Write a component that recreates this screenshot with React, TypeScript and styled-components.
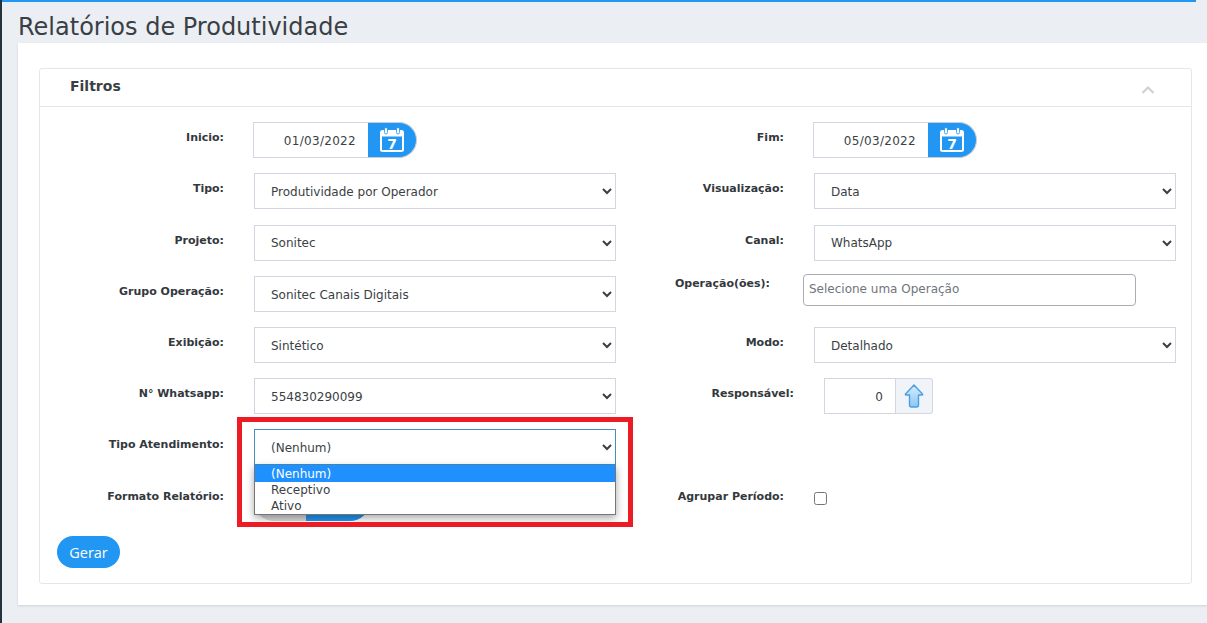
import React from "react";
import styled, { createGlobalStyle } from "styled-components";

const GlobalStyle = createGlobalStyle`
    html, body {
        margin: 0;
        padding: 0;
        background: #ebeef3;
        font-family: "DejaVu Sans", Verdana, sans-serif;
    }
`;

const PageSC = styled.div`
    position: relative;
    width: 1207px;
    height: 623px;
    overflow: hidden;
    box-sizing: border-box;
    border-left: 2px solid #26333d;
`;
const TopLineSC = styled.div`
    height: 2px;
    width: 1194px;
    background: #2196f3;
`;
const TitleSC = styled.h1`
    margin: 0;
    height: 41px;
    padding-left: 16px;
    font-size: 24px;
    font-weight: 400;
    line-height: 50px;
    color: #3a3f45;
    white-space: nowrap;
`;
const PanelSC = styled.div`
    margin-left: 16px;
    padding: 25px 15px 21px 21px;
    background: #fff;
    box-shadow: 0 1px 2px rgba(0, 0, 0, 0.12);
`;
const CardSC = styled.section`
    border: 1px solid #e4e6ea;
    border-radius: 3px;
`;
const CardHeaderSC = styled.header`
    display: flex;
    align-items: center;
    justify-content: space-between;
    box-sizing: border-box;
    height: 38px;
    padding: 0 36px 0 30px;
    border-bottom: 1px solid #e4e6ea;
    font-size: 14px;
    font-weight: 700;
    color: #3a3f45;
`;
const CardTitleSC = styled.span`
    margin-bottom: 4px;
`;
const CollapseSC = styled.svg`
    margin-top: 4px;
`;
const CardBodySC = styled.div`
    display: grid;
    grid-template-columns: 560px 560px;
    row-gap: 15.2px;
    padding: 15.29px 15px 14.6px 16px;
`;
const FieldSC = styled.div<{ $labelWidth?: number; $gap?: number; $raise?: number }>`
    display: grid;
    grid-template-columns: ${(p) => p.$labelWidth ?? 168}px 1fr;
    column-gap: ${(p) => p.$gap ?? 30}px;
    align-items: start;
    margin-top: ${(p) => -(p.$raise ?? 0)}px;
`;
const LabelSC = styled.label<{ $top?: number }>`
    padding-top: ${(p) => p.$top ?? 9}px;
    font-size: 11px;
    line-height: 14px;
    font-weight: 700;
    color: #33383d;
    text-align: right;
    white-space: nowrap;
`;
const SelectSC = styled.select<{ $focused?: boolean }>`
    display: block;
    box-sizing: border-box;
    width: 362px;
    height: 36px;
    padding: 1.6px 0 0 12px;
    background: #fff;
    border: 1px solid ${(p) => (p.$focused ? "#4a8db8" : "#d3d6e0")};
    border-radius: 0;
    outline: none;
    font-family: inherit;
    font-size: 12px;
    color: #3a3f45;
`;
const DateBoxSC = styled.div`
    display: flex;
    width: 164px;
    height: 36px;
    margin-left: -1px;
`;
const DateInputSC = styled.div`
    box-sizing: border-box;
    width: 115px;
    padding-right: 12px;
    border: 1px solid #d3d6e0;
    border-right: none;
    font-size: 12px;
    letter-spacing: 0.3px;
    line-height: 37px;
    color: #3a3f45;
    text-align: right;
`;
const DateButtonSC = styled.button`
    display: flex;
    align-items: center;
    justify-content: center;
    box-sizing: border-box;
    width: 49px;
    padding: 0 1px 0 0;
    background: #2196f3;
    border: 1px solid #c8ccd6;
    border-left: none;
    border-radius: 0 18px 18px 0;
`;
const OperationSC = styled.input`
    box-sizing: border-box;
    width: 333px;
    height: 32px;
    padding: 0 5px 2px;
    border: 1px solid #a9adb3;
    border-radius: 4px;
    outline: none;
    font-family: inherit;
    font-size: 12px;
    &::placeholder {
        color: #6f757b;
        opacity: 1;
    }
`;
const StepperSC = styled.div`
    display: flex;
    width: 109px;
    height: 36px;
`;
const StepperValueSC = styled.div`
    box-sizing: border-box;
    width: 72px;
    padding-right: 12px;
    border: 1px solid #d3d6e0;
    font-size: 12px;
    line-height: 37px;
    color: #3a3f45;
    text-align: right;
`;
const StepperButtonSC = styled.div`
    display: flex;
    align-items: center;
    justify-content: center;
    box-sizing: border-box;
    width: 37px;
    background: #f0f3f8;
    border: 1px solid #d3d6e0;
    border-left: none;
    border-radius: 0 3px 3px 0;
`;
const ToggleSC = styled.div`
    display: flex;
    width: 116px;
    height: 40.5px;
    border-radius: 0 0 20px 20px;
    overflow: hidden;
`;
const ToggleSideSC = styled.div<{ $on?: boolean }>`
    flex: ${(p) => (p.$on ? "0 0 64px" : "0 0 52px")};
    background: ${(p) => (p.$on ? "#2196f3" : "#d8d8d8")};
`;
const CheckSC = styled.input`
    width: 13px;
    height: 13px;
    margin: 11px 0 0;
`;
const ActionsSC = styled.div`
    grid-column: 1 / -1;
`;
const GerarSC = styled.button`
    display: block;
    width: 63px;
    height: 32px;
    margin-left: 1px;
    padding: 0;
    background: #2196f3;
    border: none;
    border-radius: 16px;
    font-family: "Open Sans", sans-serif;
    font-size: 14.5px;
    color: #fff;
`;
const PopupSC = styled.ul`
    position: absolute;
    left: 252px;
    top: 465px;
    box-sizing: border-box;
    width: 362px;
    height: 50px;
    margin: 0;
    padding: 0;
    list-style: none;
    background: #fff;
    border: 1px solid #767676;
    border-top: none;
    box-shadow: 0 3px 8px rgba(0, 0, 0, 0.35);
    font-size: 12px;
    color: #3a3f45;
`;
const OptionSC = styled.li<{ $selected?: boolean }>`
    height: ${(p) => (p.$selected ? 17 : 16)}px;
    padding-left: 16px;
    line-height: ${(p) => (p.$selected ? 18 : 16)}px;
    background: ${(p) => (p.$selected ? "#1e90ff" : "transparent")};
    color: ${(p) => (p.$selected ? "#fff" : "inherit")};
`;
const HighlightSC = styled.div`
    position: absolute;
    left: 235px;
    top: 417px;
    box-sizing: border-box;
    width: 396px;
    height: 110px;
    border: 5px solid #ed1c24;
    pointer-events: none;
`;

const CalendarIcon = () => (
    <svg width="26" height="26" viewBox="0 0 26 26" aria-hidden="true">
        <rect x="1" y="3" width="24" height="22" rx="2.5" fill="#fff" />
        <rect x="3" y="9.5" width="20" height="13.5" fill="#2196f3" />
        <rect x="5.5" y="0.5" width="3" height="6.5" rx="1.5" fill="#fff" stroke="#2196f3" strokeWidth="0.8" />
        <rect x="17.5" y="0.5" width="3" height="6.5" rx="1.5" fill="#fff" stroke="#2196f3" strokeWidth="0.8" />
        <text x="13" y="21.5" textAnchor="middle" fontSize="14" fontWeight="700" fill="#fff" fontFamily="DejaVu Sans, sans-serif">
            7
        </text>
    </svg>
);

const ArrowUpIcon = () => (
    <svg width="20" height="26" viewBox="0 0 20 26" aria-hidden="true">
        <defs>
            <linearGradient id="arrowFill" x1="0" y1="0" x2="0" y2="1">
                <stop offset="0" stopColor="#d6ecfd" />
                <stop offset="1" stopColor="#8cc6f5" />
            </linearGradient>
        </defs>
        <path
            d="M10 2 L18.5 11 Q19 12 18 12 H14.5 V22 Q14.5 24 12.5 24 H7.5 Q5.5 24 5.5 22 V12 H2 Q1 12 1.5 11 Z"
            fill="url(#arrowFill)"
            stroke="#4d9fe3"
            strokeWidth="1.4"
            strokeLinejoin="round"
        />
    </svg>
);

const Collapse = () => (
    <CollapseSC width="14" height="10" viewBox="0 0 14 10" aria-hidden="true">
        <path d="M1.5 8 L7 2.5 L12.5 8" fill="none" stroke="#cfd1d4" strokeWidth="2.2" />
    </CollapseSC>
);

const DateField = ({ value }: { value: string }) => (
    <DateBoxSC>
        <DateInputSC>{value}</DateInputSC>
        <DateButtonSC type="button">
            <CalendarIcon />
        </DateButtonSC>
    </DateBoxSC>
);

const Combo = ({ value, focused }: { value: string; focused?: boolean }) => (
    <SelectSC $focused={focused} defaultValue={value}>
        <option>{value}</option>
    </SelectSC>
);

export default function App() {
    return (
        <PageSC>
            <GlobalStyle />
            <TopLineSC />
            <TitleSC>Relatórios de Produtividade</TitleSC>
            <PanelSC>
                <CardSC>
                    <CardHeaderSC>
                        <CardTitleSC>Filtros</CardTitleSC>
                        <Collapse />
                    </CardHeaderSC>
                    <CardBodySC>
                        <FieldSC>
                            <LabelSC>Inicio:</LabelSC>
                            <DateField value="01/03/2022" />
                        </FieldSC>
                        <FieldSC>
                            <LabelSC>Fim:</LabelSC>
                            <DateField value="05/03/2022" />
                        </FieldSC>
                        <FieldSC>
                            <LabelSC>Tipo:</LabelSC>
                            <Combo value="Produtividade por Operador" />
                        </FieldSC>
                        <FieldSC>
                            <LabelSC>Visualização:</LabelSC>
                            <Combo value="Data" />
                        </FieldSC>
                        <FieldSC>
                            <LabelSC>Projeto:</LabelSC>
                            <Combo value="Sonitec" />
                        </FieldSC>
                        <FieldSC>
                            <LabelSC>Canal:</LabelSC>
                            <Combo value="WhatsApp" />
                        </FieldSC>
                        <FieldSC>
                            <LabelSC>Grupo Operação:</LabelSC>
                            <Combo value="Sonitec Canais Digitais" />
                        </FieldSC>
                        <FieldSC $labelWidth={154} $gap={33} $raise={2}>
                            <LabelSC $top={3}>Operação(ões):</LabelSC>
                            <OperationSC placeholder="Selecione uma Operação" />
                        </FieldSC>
                        <FieldSC>
                            <LabelSC>Exibição:</LabelSC>
                            <Combo value="Sintético" />
                        </FieldSC>
                        <FieldSC>
                            <LabelSC>Modo:</LabelSC>
                            <Combo value="Detalhado" />
                        </FieldSC>
                        <FieldSC>
                            <LabelSC>N° Whatsapp:</LabelSC>
                            <Combo value="554830290099" />
                        </FieldSC>
                        <FieldSC $labelWidth={178}>
                            <LabelSC>Responsável:</LabelSC>
                            <StepperSC>
                                <StepperValueSC>0</StepperValueSC>
                                <StepperButtonSC>
                                    <ArrowUpIcon />
                                </StepperButtonSC>
                            </StepperSC>
                        </FieldSC>
                        <FieldSC>
                            <LabelSC>Tipo Atendimento:</LabelSC>
                            <Combo value="(Nenhum)" focused />
                        </FieldSC>
                        <div />
                        <FieldSC>
                            <LabelSC>Formato Relatório:</LabelSC>
                            <ToggleSC>
                                <ToggleSideSC />
                                <ToggleSideSC $on />
                            </ToggleSC>
                        </FieldSC>
                        <FieldSC>
                            <LabelSC>Agrupar Período:</LabelSC>
                            <CheckSC type="checkbox" />
                        </FieldSC>
                        <ActionsSC>
                            <GerarSC type="button">Gerar</GerarSC>
                        </ActionsSC>
                    </CardBodySC>
                </CardSC>
            </PanelSC>
            <PopupSC>
                <OptionSC $selected>(Nenhum)</OptionSC>
                <OptionSC>Receptivo</OptionSC>
                <OptionSC>Ativo</OptionSC>
            </PopupSC>
            <HighlightSC />
        </PageSC>
    );
}
